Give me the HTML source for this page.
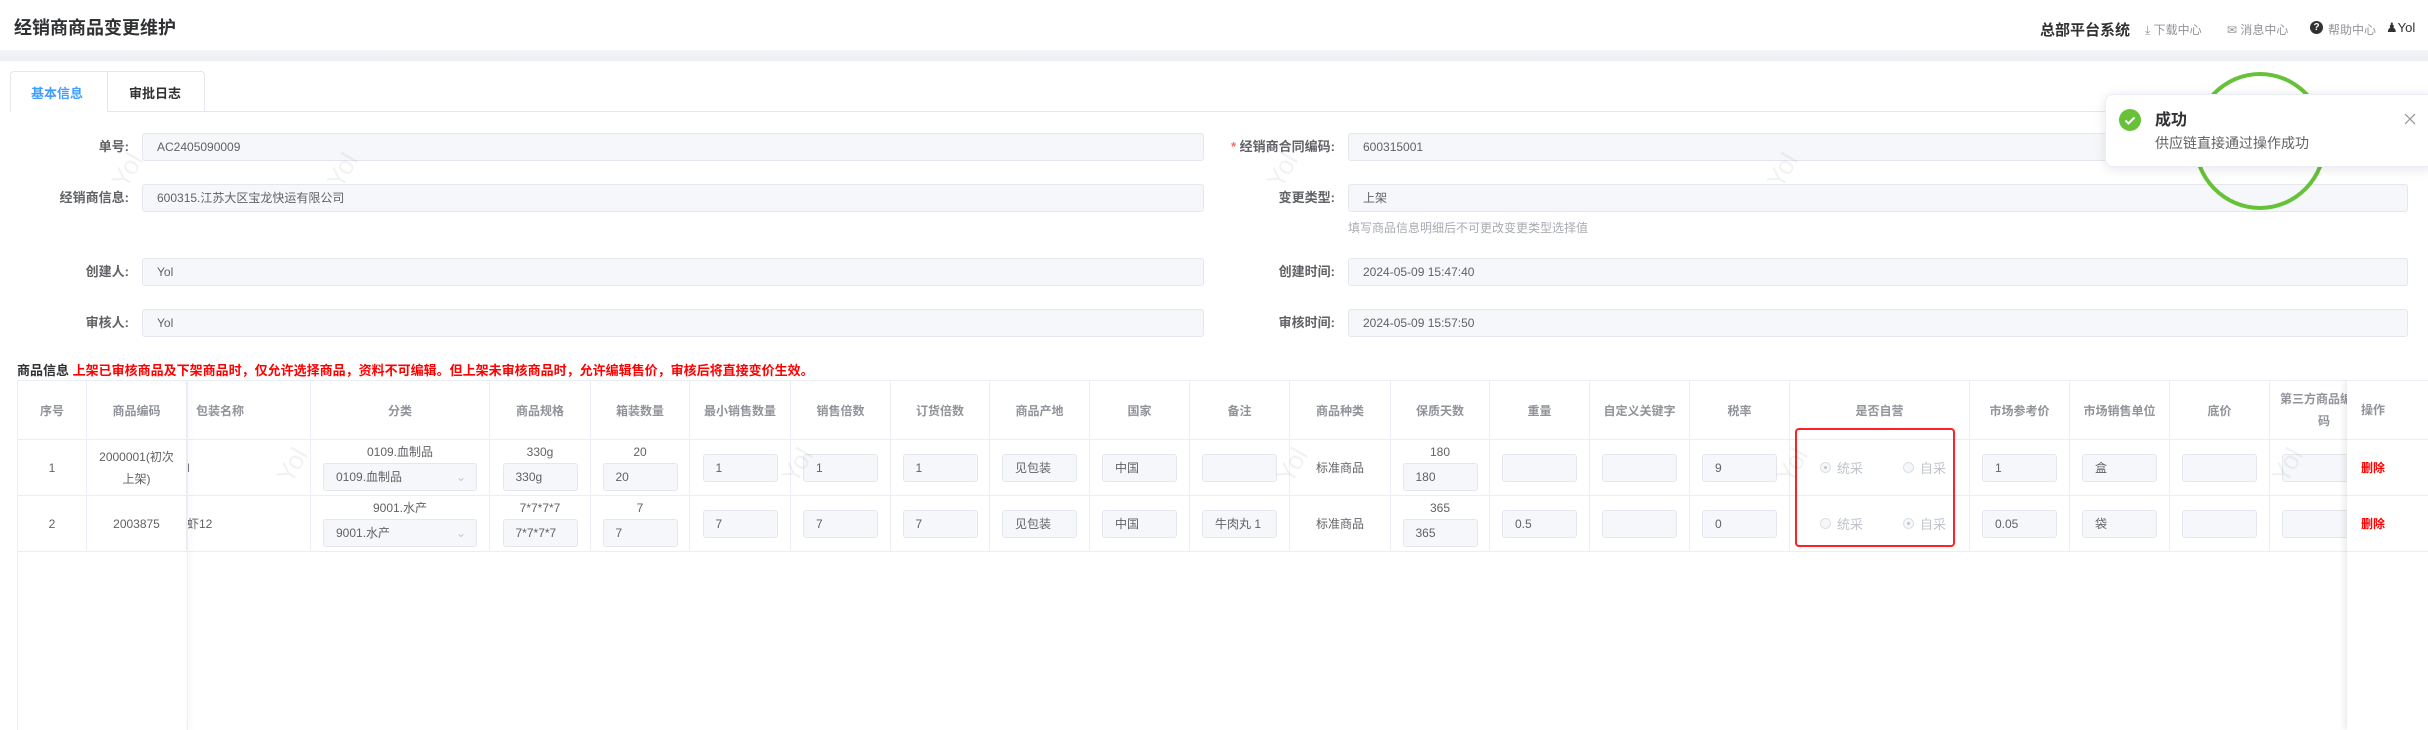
<!DOCTYPE html>
<html><head><meta charset="utf-8"><style>
*{box-sizing:border-box;margin:0;padding:0}
body{width:2428px;height:730px;overflow:hidden;background:#fff;font-family:"Liberation Sans","Noto Sans CJK SC",sans-serif;color:#606266;position:relative;font-size:12px}
.a{position:absolute}
.lbl{position:absolute;font-size:13px;color:#606266;font-weight:bold;text-align:right;line-height:28px}
.inp{position:absolute;height:28px;background:#f5f7fa;border:1px solid #e4e7ed;border-radius:3px;font-size:12px;color:#606266;line-height:26px;padding-left:14px}
table{border-collapse:collapse;table-layout:fixed;position:absolute;left:17px;top:380px;width:2452px}
td,th{border:1px solid #ebeef5;text-align:center;font-size:12px;color:#606266;position:relative;overflow:hidden;white-space:nowrap}
th{color:#909399;font-weight:bold;height:59px}
td{height:56px}
.ci{display:inline-block;width:75px;height:28px;background:#f5f7fa;border:1px solid #e4e7ed;border-radius:3px;text-align:left;padding-left:12px;line-height:26px;vertical-align:middle}
.two{line-height:16px}
.two .ci{margin-top:3px}
.rd{display:inline-block;width:11px;height:11px;border:1px solid #dcdfe6;border-radius:50%;background:#f5f7fa;vertical-align:middle;margin-right:6px;position:relative}
.rd.on:after{content:"";position:absolute;left:3px;top:3px;width:3px;height:3px;border-radius:50%;background:#c0c4cc}
.rl{color:#c0c4cc;font-size:13px;vertical-align:middle}
.wm{position:absolute;color:rgba(0,0,0,0.05);font-size:26px;transform:rotate(-60deg)}
</style></head><body>
<div class="a" style="left:14px;top:14px;font-size:18px;font-weight:bold;color:#303133">经销商商品变更维护</div>
<div class="a" style="left:2040px;top:19px;font-size:15px;font-weight:bold;color:#303133">总部平台系统</div>
<div class="a" style="left:2145px;top:21px;font-size:12px;color:#909399">⤓ 下载中心</div>
<div class="a" style="left:2227px;top:21px;font-size:12px;color:#909399">✉ 消息中心</div>
<div class="a" style="left:2310px;top:21px;width:13px;height:13px;border-radius:50%;background:#303133;color:#fff;font-size:10px;font-weight:bold;text-align:center;line-height:13px">?</div>
<div class="a" style="left:2328px;top:21px;font-size:12px;color:#909399">帮助中心</div>
<div class="a" style="left:2386px;top:20px;font-size:13px;color:#303133">&#9823;Yol</div>
<div class="a" style="left:0;top:50px;width:2428px;height:11px;background:linear-gradient(#f5f6f8,#eceef2)"></div>
<!-- tabs -->
<div class="a" style="left:10px;top:71px;width:195px;height:41px;border:1px solid #e4e7ed;border-bottom:none;border-radius:4px 4px 0 0"></div>
<div class="a" style="left:107px;top:71px;width:1px;height:41px;background:#e4e7ed"></div>
<div class="a" style="left:108px;top:111px;width:2320px;height:1px;background:#e4e7ed"></div>
<div class="a" style="left:31px;top:83px;font-size:13px;color:#409eff;font-weight:bold">基本信息</div>
<div class="a" style="left:129px;top:83px;font-size:13px;color:#303133;font-weight:bold">审批日志</div>
<!-- form -->
<div class="lbl" style="left:20px;width:109px;top:133px">单号:</div>
<div class="inp" style="left:142px;width:1062px;top:133px">AC2405090009</div>
<div class="lbl" style="left:20px;width:109px;top:184px">经销商信息:</div>
<div class="inp" style="left:142px;width:1062px;top:184px">600315.江苏大区宝龙快运有限公司</div>
<div class="lbl" style="left:20px;width:109px;top:258px">创建人:</div>
<div class="inp" style="left:142px;width:1062px;top:258px">Yol</div>
<div class="lbl" style="left:20px;width:109px;top:309px">审核人:</div>
<div class="inp" style="left:142px;width:1062px;top:309px">Yol</div>
<div class="lbl" style="left:1200px;width:135px;top:133px"><span style="color:#f56c6c">*</span> 经销商合同编码:</div>
<div class="inp" style="left:1348px;width:1060px;top:133px">600315001</div>
<div class="lbl" style="left:1200px;width:135px;top:184px">变更类型:</div>
<div class="inp" style="left:1348px;width:1060px;top:184px">上架</div>
<div class="a" style="left:1348px;top:219px;font-size:12px;color:#a8abb2">填写商品信息明细后不可更改变更类型选择值</div>
<div class="lbl" style="left:1200px;width:135px;top:258px">创建时间:</div>
<div class="inp" style="left:1348px;width:1060px;top:258px">2024-05-09 15:47:40</div>
<div class="lbl" style="left:1200px;width:135px;top:309px">审核时间:</div>
<div class="inp" style="left:1348px;width:1060px;top:309px">2024-05-09 15:57:50</div>
<div class="a" style="left:17px;top:360px;font-size:13px;font-weight:bold;color:#303133">商品信息 <span style="color:#f00;font-weight:bold">上架已审核商品及下架商品时，仅允许选择商品，资料不可编辑。但上架未审核商品时，允许编辑售价，审核后将直接变价生效。</span></div>
<div class="a" style="left:17px;top:380px;width:2411px;height:350px;overflow:hidden;border-left:1px solid #ebeef5">
<table style="left:-1px;top:0">
<colgroup><col style="width:69px"><col style="width:100px"><col style="width:124px"><col style="width:179px"><col style="width:101px"><col style="width:99px"><col style="width:101px"><col style="width:100px"><col style="width:99px"><col style="width:100px"><col style="width:100px"><col style="width:100px"><col style="width:101px"><col style="width:99px"><col style="width:100px"><col style="width:100px"><col style="width:100px"><col style="width:180px"><col style="width:100px"><col style="width:100px"><col style="width:100px"><col style="width:100px"><col style="width:100px"></colgroup>
<tr><th>序号</th><th>商品编码</th><th style="text-align:left;padding-left:9px">包装名称</th><th>分类</th><th>商品规格</th><th>箱装数量</th><th>最小销售数量</th><th>销售倍数</th><th>订货倍数</th><th>商品产地</th><th>国家</th><th>备注</th><th>商品种类</th><th>保质天数</th><th>重量</th><th>自定义关键字</th><th>税率</th><th>是否自营</th><th>市场参考价</th><th>市场销售单位</th><th>底价</th><th style="line-height:22px;text-align:left;padding-left:10px">第三方商品编<br><span style="padding-left:38px">码</span></th><th></th></tr>
<tr style="height:56px"><td>1</td><td style="line-height:22px">2000001(初次<br>上架)</td><td style="text-align:left">l</td>
<td class="two">0109.血制品<br><span class="ci" style="width:154px;position:relative">0109.血制品<span style="position:absolute;right:10px;color:#c0c4cc">&#8964;</span></span></td>
<td class="two">330g<br><span class="ci">330g</span></td><td class="two">20<br><span class="ci">20</span></td>
<td><span class="ci">1</span></td><td><span class="ci">1</span></td><td><span class="ci">1</span></td><td><span class="ci">见包装</span></td><td><span class="ci">中国</span></td><td><span class="ci"></span></td><td>标准商品</td>
<td class="two">180<br><span class="ci">180</span></td><td><span class="ci"></span></td><td><span class="ci"></span></td><td><span class="ci">9</span></td>
<td style="text-align:left;padding-left:30px"><span class="rd on"></span><span class="rl">统采</span><span style="display:inline-block;width:40px"></span><span class="rd"></span><span class="rl">自采</span></td>
<td><span class="ci">1</span></td><td><span class="ci">盒</span></td><td><span class="ci"></span></td><td><span class="ci"></span></td><td></td></tr>
<tr style="height:56px"><td>2</td><td>2003875</td><td style="text-align:left">虾12</td>
<td class="two">9001.水产<br><span class="ci" style="width:154px;position:relative">9001.水产<span style="position:absolute;right:10px;color:#c0c4cc">&#8964;</span></span></td>
<td class="two">7*7*7*7<br><span class="ci">7*7*7*7</span></td><td class="two">7<br><span class="ci">7</span></td>
<td><span class="ci">7</span></td><td><span class="ci">7</span></td><td><span class="ci">7</span></td><td><span class="ci">见包装</span></td><td><span class="ci">中国</span></td><td><span class="ci">牛肉丸 1</span></td><td>标准商品</td>
<td class="two">365<br><span class="ci">365</span></td><td><span class="ci">0.5</span></td><td><span class="ci"></span></td><td><span class="ci">0</span></td>
<td style="text-align:left;padding-left:30px"><span class="rd"></span><span class="rl">统采</span><span style="display:inline-block;width:40px"></span><span class="rd on"></span><span class="rl">自采</span></td>
<td><span class="ci">0.05</span></td><td><span class="ci">袋</span></td><td><span class="ci"></span></td><td><span class="ci"></span></td><td></td></tr>
</table>
<div class="a" style="left:169px;top:0;width:1px;height:350px;box-shadow:2px 0 6px rgba(0,0,0,0.12);background:#ebeef5"></div>
<div class="a" style="left:2329px;top:0;width:82px;height:350px;background:#fff;box-shadow:-3px 0 6px rgba(0,0,0,0.08);border-top:1px solid #ebeef5">
<div class="a" style="left:0;top:0;width:82px;height:59px;border-bottom:1px solid #ebeef5;font-weight:bold;color:#909399;line-height:58px;padding-left:14px">操作</div>
<div class="a" style="left:0;top:59px;width:82px;height:56px;border-bottom:1px solid #ebeef5;color:#f00;font-weight:bold;line-height:56px;padding-left:14px">删除</div>
<div class="a" style="left:0;top:115px;width:82px;height:56px;border-bottom:1px solid #ebeef5;color:#f00;font-weight:bold;line-height:56px;padding-left:14px">删除</div>
</div>
</div>
<div class="a" style="left:1795px;top:428px;width:160px;height:119px;border:2px solid #f22;border-radius:4px"></div>
<!-- watermarks -->
<div class="wm" style="left:110px;top:155px">Yol</div><div class="wm" style="left:325px;top:155px">Yol</div>
<div class="wm" style="left:1265px;top:155px">Yol</div><div class="wm" style="left:1765px;top:155px">Yol</div>
<div class="wm" style="left:275px;top:450px">Yol</div><div class="wm" style="left:780px;top:450px">Yol</div>
<div class="wm" style="left:1275px;top:450px">Yol</div><div class="wm" style="left:1775px;top:450px">Yol</div><div class="wm" style="left:2270px;top:450px">Yol</div>
<!-- ring + toast -->
<div class="a" style="left:2193px;top:72px;width:134px;height:138px;border:4px solid #67c23a;border-radius:50%"></div>
<div class="a" style="left:2105px;top:94px;width:330px;height:73px;background:#fff;border:1px solid #ebeef5;border-radius:8px;box-shadow:0 2px 12px rgba(0,0,0,0.1)"></div>
<div class="a" style="left:2119px;top:109px;width:22px;height:22px;border-radius:50%;background:#67c23a"><svg width="22" height="22"><path d="M6.5 11.5l3 3 6-6" stroke="#fff" stroke-width="2" fill="none"/></svg></div>
<div class="a" style="left:2155px;top:106px;font-size:16px;font-weight:bold;color:#303133">成功</div>
<div class="a" style="left:2155px;top:133px;font-size:14px;color:#606266">供应链直接通过操作成功</div>
<div class="a" style="left:2404px;top:113px"><svg width="12" height="12"><path d="M1 1L11 11M11 1L1 11" stroke="#909399" stroke-width="1.2"/></svg></div>
</body></html>
